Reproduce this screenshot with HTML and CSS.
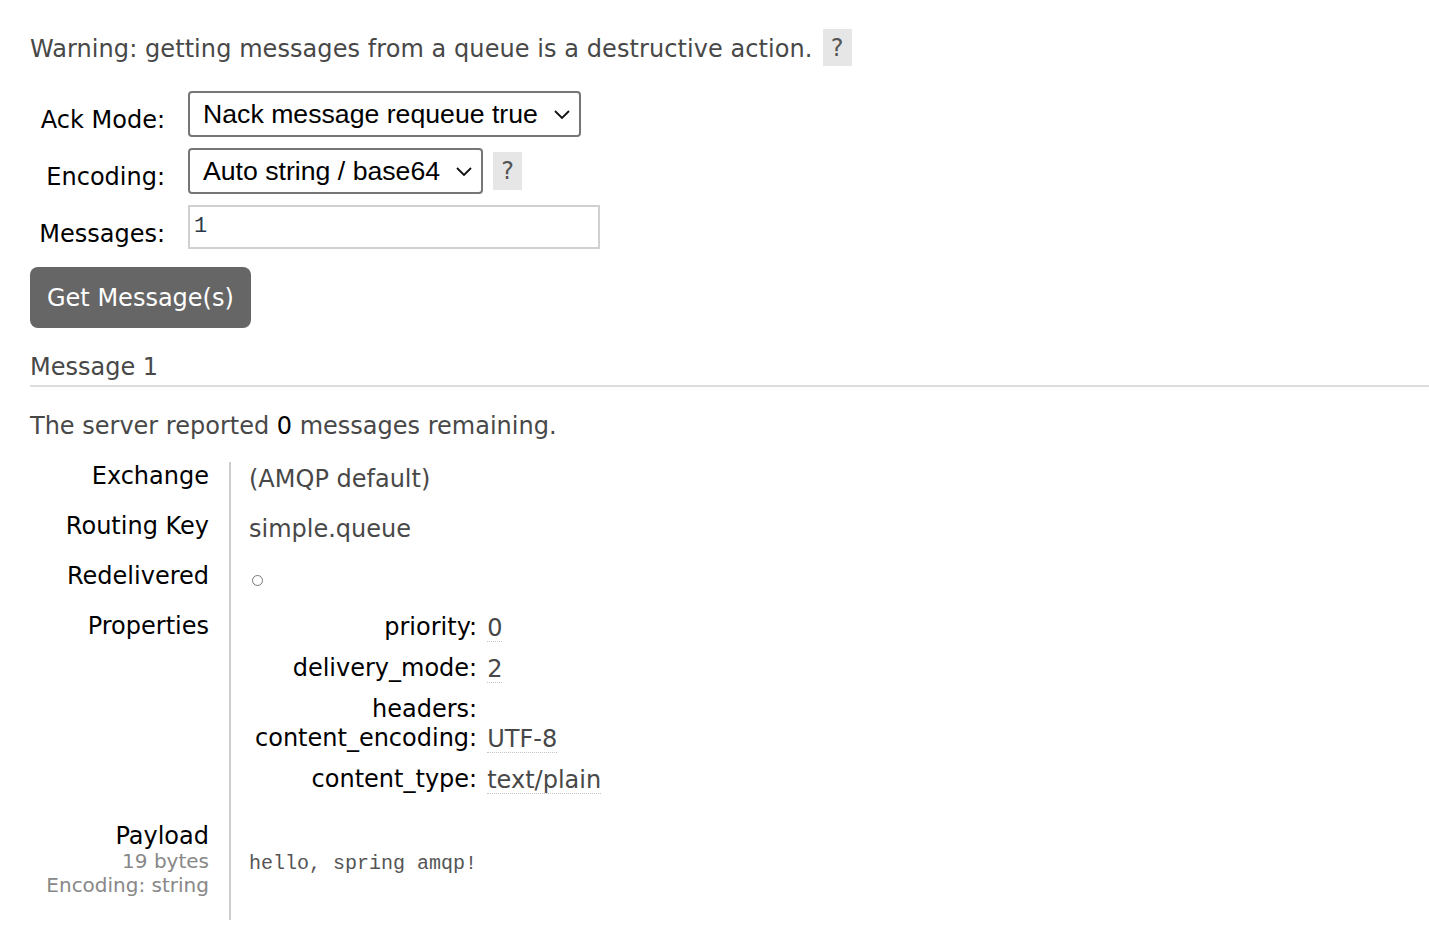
FILE: index.html
```html
<!DOCTYPE html>
<html>
<head>
<meta charset="utf-8">
<title>Get messages</title>
<link rel="stylesheet" href="styles.css">
</head>
<body>
<div class="page">
  <p class="warning"><span class="warning-text">Warning: getting messages from a queue is a destructive action.</span><span class="help">?</span></p>

  <div class="form">
    <label class="flabel">Ack Mode:</label>
    <div class="fctrl">
      <div class="select"><span>Nack message requeue true</span><svg viewBox="0 0 16 9" class="chev"><path d="M1 1 L8 8 L15 1" fill="none" stroke="#111" stroke-width="1.8"/></svg></div>
    </div>
    <label class="flabel">Encoding:</label>
    <div class="fctrl">
      <div class="select"><span>Auto string / base64</span><svg viewBox="0 0 16 9" class="chev"><path d="M1 1 L8 8 L15 1" fill="none" stroke="#111" stroke-width="1.8"/></svg></div>
      <span class="help help-tall">?</span>
    </div>
    <label class="flabel">Messages:</label>
    <div class="fctrl">
      <div class="input">1</div>
    </div>
  </div>

  <button class="btn">Get Message(s)</button>

  <h3 class="msg-title">Message 1</h3>
  <p class="remaining">The server reported <b>0</b> messages remaining.</p>

  <div class="details">
    <div class="dt">Exchange</div>
    <div class="dd">(AMQP default)</div>

    <div class="dt">Routing Key</div>
    <div class="dd">simple.queue</div>

    <div class="dt">Redelivered</div>
    <div class="dd"><span class="circle"></span></div>

    <div class="dt">Properties</div>
    <div class="dd dd-props">
      <div class="props">
        <div class="pk">priority:</div>
        <div class="pv"><span>0</span></div>
        <div class="pk">delivery_mode:</div>
        <div class="pv"><span>2</span></div>
        <div class="pk">headers:</div>
        <div class="pv"></div>
        <div class="pk">content_encoding:</div>
        <div class="pv"><span>UTF-8</span></div>
        <div class="pk">content_type:</div>
        <div class="pv"><span>text/plain</span></div>
      </div>
    </div>

    <div class="dt dt-payload">
      <div class="pl">Payload</div>
      <div class="sub">19 bytes</div>
      <div class="sub">Encoding: string</div>
    </div>
    <div class="dd dd-payload"><pre class="payload">hello, spring amqp!</pre></div>
  </div>
</div>
</body>
</html>
```
FILE: styles.css
```css
body {
  margin: 0;
  background: #fff;
  color: #484848;
  font-family: "DejaVu Sans", Verdana, sans-serif;
  font-size: 24px;
}

.page {
  padding: 29px 0 0 30px;
}

.warning {
  display: flex;
  align-items: center;
  gap: 10px;
  margin: 0;
  height: 37px;
  line-height: 28px;
}

.warning-text {
  padding-top: 2px;
  letter-spacing: 0.07px;
}

.help {
  display: inline-flex;
  align-items: center;
  justify-content: center;
  width: 29px;
  height: 37px;
  background: #e6e6e6;
  color: #555;
}

.help-tall {
  height: 38px;
}

.form {
  display: grid;
  grid-template-columns: 135px auto;
  column-gap: 23px;
  row-gap: 11px;
  justify-content: start;
  margin-top: 25px;
}

.flabel {
  text-align: right;
  padding-top: 15px;
  line-height: 28px;
  color: #000;
}

.fctrl {
  display: flex;
  align-items: center;
  gap: 10px;
}

.select {
  box-sizing: border-box;
  display: flex;
  align-items: center;
  gap: 16px;
  height: 46px;
  padding: 0 9px 0 13px;
  border: 2px solid #767676;
  border-radius: 4px;
  font-family: "Liberation Sans", Arial, sans-serif;
  font-size: 26.67px;
  color: #000;
}

.chev {
  width: 16px;
  height: 9px;
  display: block;
}

.input {
  box-sizing: border-box;
  width: 412px;
  height: 44px;
  padding: 0 4px;
  border: 2px solid #d0d0d0;
  font-family: "Liberation Mono", monospace;
  font-size: 22px;
  line-height: 40px;
  color: #2b3a48;
}

.btn {
  display: block;
  margin-top: 18px;
  height: 61px;
  padding: 0 17px;
  border: 0;
  border-radius: 8px;
  background: #666;
  color: #fff;
  font-family: "DejaVu Sans", Verdana, sans-serif;
  font-size: 24px;
}

.msg-title {
  margin: 25px 0 0;
  padding-bottom: 4px;
  border-bottom: 2px solid #ddd;
  font-size: 24px;
  font-weight: normal;
  line-height: 28px;
  color: #484848;
}

.remaining {
  margin: 25px 0 0;
  line-height: 28px;
}

.remaining b {
  font-weight: normal;
  color: #000;
}

.details {
  display: grid;
  grid-template-columns: 199px auto;
  justify-content: start;
  margin-top: 22px;
}

.dt {
  text-align: right;
  padding: 0 20px 20px 0;
  line-height: 28px;
  color: #000;
}

.dd {
  border-left: 2px solid #ccc;
  padding: 3px 0 19px 18px;
  line-height: 28px;
}

.circle {
  display: inline-block;
  width: 9px;
  height: 9px;
  margin-left: 3px;
  border: 1px solid #777;
  border-radius: 50%;
  vertical-align: middle;
}

.dd-props {
  padding-top: 1px;
  padding-bottom: 17px;
}

.props {
  display: grid;
  grid-template-columns: auto auto;
  column-gap: 10px;
  justify-content: start;
}

.pk {
  text-align: right;
  padding: 0 0 1px 6px;
  line-height: 28px;
  color: #000;
}

.pv {
  display: flex;
  align-items: flex-start;
}

.pv span {
  display: block;
  margin: 2px 0 12px;
  line-height: 26px;
  border-bottom: 1px dotted #c4c4c4;
}

.dt-payload {
  padding-bottom: 23px;
}

.pl {
  line-height: 26px;
}

.sub {
  font-size: 20px;
  line-height: 24px;
  color: #888;
}

.dd-payload {
  padding-top: 29px;
}

.payload {
  margin: 0;
  font-family: "Liberation Mono", monospace;
  font-size: 20px;
  line-height: 24px;
  color: #555;
}
```
